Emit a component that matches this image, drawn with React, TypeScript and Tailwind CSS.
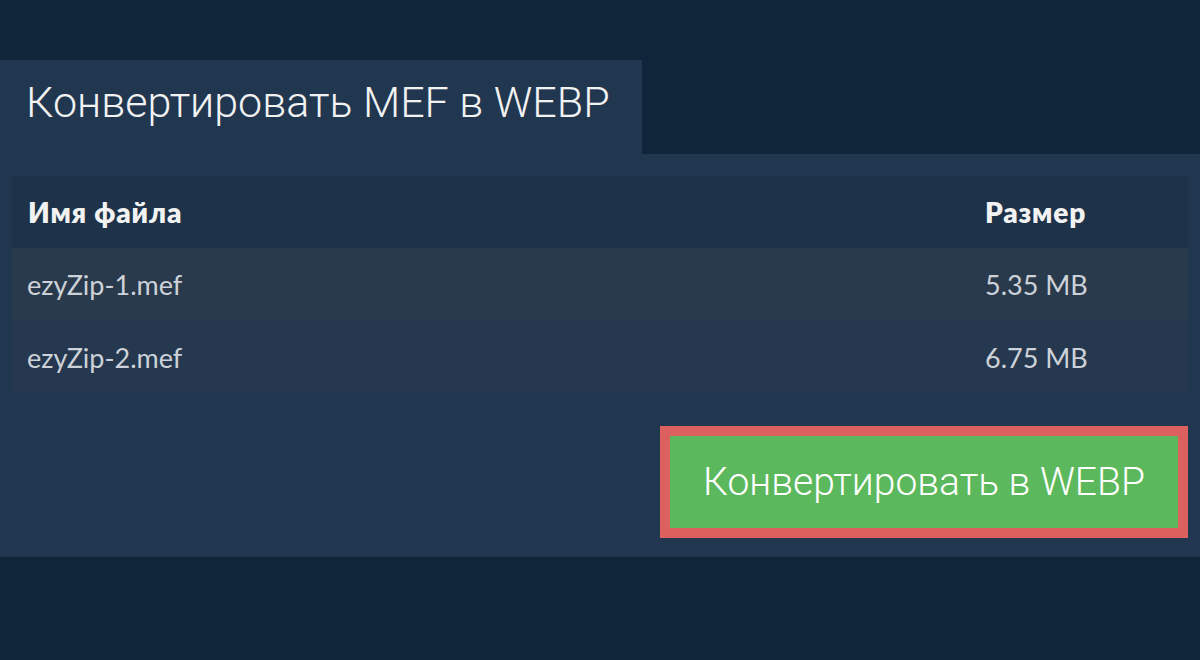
import React from "react"

interface Fichier {
  nom: string
  taille: string
}

const fichiers: Fichier[] = [
  { nom: "ezyZip-1.mef", taille: "5.35 MB" },
  { nom: "ezyZip-2.mef", taille: "6.75 MB" },
]

const App = () => {
  return (
    <div className="w-[1200px] h-[660px] bg-[#10243a] pt-[60px] font-['Lato','Noto_Sans',sans-serif]">
      {/* onglet du titre */}
      <div className="w-[642px] h-[94px] bg-[#213750] flex items-center pl-[26px]">
        <h1 className="text-[43px] font-light text-[#f2f2f2] font-['Roboto','Noto_Sans',sans-serif] -mt-[10px]">
          Конвертировать MEF в WEBP
        </h1>
      </div>

      <div className="bg-[#213750] pt-[22px] pb-[19px] px-[12px]">
        <div className="w-full">
          <div className="grid grid-cols-[1fr_203px] h-[72px] items-center bg-[#1e3349] text-[28px] font-extrabold tracking-[0.03em] text-[#f2f2f2]">
            <div className="pl-[16px]">Имя файла</div>
            <div>Размер</div>
          </div>
          {fichiers.map((f, i) => (
            <div
              key={f.nom}
              className={
                "grid grid-cols-[1fr_203px] items-center text-[27px] text-[#cdd2d8] " +
                (i === 0 ? "h-[73px] bg-[#2a3a4d]" : "h-[72px] bg-[#25384f]")
              }
            >
              <div className="pl-[15px] pt-[2px]">{f.nom}</div>
              <div className="pt-[2px]">{f.taille}</div>
            </div>
          ))}
        </div>

        <div className="flex justify-end mt-[33px]">
          <button className="w-[528px] h-[112px] border-[10px] border-[#dc605d] bg-[#5cb85c] text-white text-[39px] font-light font-['Roboto','Noto_Sans',sans-serif]">
            Конвертировать в WEBP
          </button>
        </div>
      </div>
    </div>
  )
}

export default App
